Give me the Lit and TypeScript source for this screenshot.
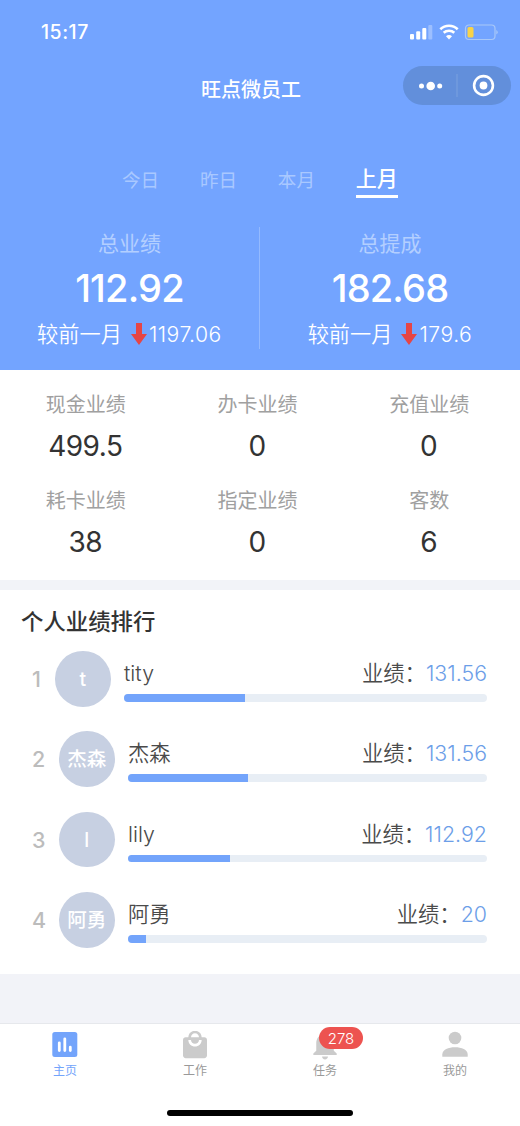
import { LitElement, html, css, svg } from "lit";
import { customElement } from "lit/decorators.js";
import { classMap } from "lit/directives/class-map.js";
import { styleMap } from "lit/directives/style-map.js";

const totals = [
  { label: "总业绩", value: "112.92", diff: "1197.06" },
  { label: "总提成", value: "182.68", diff: "179.6" },
];

const metrics = [
  { label: "现金业绩", value: "499.5" },
  { label: "办卡业绩", value: "0" },
  { label: "充值业绩", value: "0" },
  { label: "耗卡业绩", value: "38" },
  { label: "指定业绩", value: "0" },
  { label: "客数", value: "6" },
];

const ranking = [
  { name: "tity", avatar: "t", value: "131.56", percent: 33.3 },
  { name: "杰森", avatar: "杰森", value: "131.56", percent: 33.3 },
  { name: "lily", avatar: "l", value: "112.92", percent: 28.5 },
  { name: "阿勇", avatar: "阿勇", value: "20", percent: 5.1 },
];

const icons = {
  home: svg`<rect x="1.3" y="1" width="25" height="25" rx="2.5" fill="#73a4fb"/>
    <path d="M8.3 11.8v7.8M13.8 7.8v11.8M19.3 16.2v3.4" stroke="#fff" stroke-width="2.8" stroke-linecap="round"/>`,
  work: svg`<path transform="translate(-2 -1.600) scale(1.333 1.310)" fill="#cbcbcb" d="M19 6h-2c0-2.760-2.240-5-5-5S7 3.240 7 6H5c-1.100 0-1.990.9-1.990 2L3 20c0 1.100.9 2 2 2h14c1.100 0 2-.9 2-2V8c0-1.100-.9-2-2-2zm-7-3c1.660 0 3 1.340 3 3H9c0-1.660 1.340-3 3-3zm0 10c-2.760 0-5-2.240-5-5h2c0 1.660 1.340 3 3 3s3-1.340 3-3h2c0 2.760-2.240 5-5 5z"/>`,
  task: svg`<path transform="translate(-3.500 -3.700) scale(1.460)" fill="#cbcbcb" d="M12 22c1.100 0 2-.9 2-2h-4c0 1.100.89 2 2 2zm6-6v-5c0-3.070-1.640-5.640-4.500-6.320V4c0-.83-.67-1.500-1.500-1.500s-1.500.67-1.500 1.500v.68C7.630 5.360 6 7.920 6 11v5l-2 2v1h16v-1l-2-2z"/>`,
  me: svg`<circle cx="14" cy="7" r="6.300" fill="#cbcbcb"/>
    <path d="M1.300 25.800v-2.300C1.300 18.800 7.500 16.300 14 16.300s12.700 2.500 12.700 7.200v2.300z" fill="#cbcbcb"/>`,
};

const tabs = [
  { label: "主页", icon: icons.home, badge: "" },
  { label: "工作", icon: icons.work, badge: "" },
  { label: "任务", icon: icons.task, badge: "278" },
  { label: "我的", icon: icons.me, badge: "" },
];

@customElement("app-root")
export class AppRoot extends LitElement {
  static styles = css`
    :host {
      display: flex;
      flex-direction: column;
      box-sizing: border-box;
      width: 520px;
      height: 1126px;
      overflow: hidden;
      background: #f2f3f8;
      font-family: Inter, "Noto Sans CJK SC", sans-serif;
      color: #333;
      white-space: nowrap;
    }
    .header {
      height: 370px;
      background: #73a4ff;
      color: #fff;
      display: flex;
      flex-direction: column;
    }
    .status {
      height: 61px;
      display: flex;
      align-items: center;
      justify-content: space-between;
      padding: 0 21px 0 41px;
    }
    .time {
      font-size: 19.500px;
      font-weight: 500;
      letter-spacing: 0.5px;
      padding-top: 2px;
    }
    .signals {
      display: block;
      width: 90px;
      height: 20px;
    }
    .nav {
      height: 49px;
      display: grid;
      grid-template-columns: 1fr auto 1fr;
      align-items: center;
      padding-right: 9px;
    }
    .title {
      grid-column: 2;
      font-size: 20px;
      line-height: 28px;
      font-weight: 500;
      padding: 9px 18px 0 0;
      margin: 0 -18px 0 -9px;
    }
    .capsule {
      justify-self: end;
      width: 108px;
      height: 39px;
      border-radius: 20px;
      background: #628fdb;
    }
    .capsule svg {
      display: block;
    }
    .periods {
      display: flex;
      gap: 40.7px;
      padding-left: 122px;
      margin-top: 50px;
      height: 38px;
      align-items: flex-start;
    }
    .period {
      font-size: 18.6px;
      line-height: 28px;
      padding-top: 6px;
      color: #a9c8ff;
    }
    .period.active {
      font-size: 21px;
      line-height: 30px;
      padding: 4px 0 1px;
      font-weight: 500;
      color: #fff;
      border-bottom: 3px solid #fff;
    }
    .totals {
      display: grid;
      grid-template-columns: 259px 261px;
      margin-top: 29px;
      height: 122px;
    }
    .total {
      display: flex;
      flex-direction: column;
      align-items: center;
    }
    .total + .total {
      border-left: 1px solid #94baff;
    }
    .total-label {
      font-size: 21px;
      line-height: 30px;
      margin-top: 2px;
      color: #b3cfff;
    }
    .total-value {
      font-size: 38px;
      line-height: 46px;
      margin-top: 6px;
      font-weight: 550;
      letter-spacing: -0.8px;
    }
    .total-diff {
      display: flex;
      align-items: center;
      font-size: 21.200px;
      line-height: 30px;
      margin-top: 8px;
      font-weight: 350;
    }
    .diff-num {
      letter-spacing: 0.5px;
    }
    .arrow {
      display: block;
      width: 16px;
      height: 22px;
      margin: 0 2px 0 9px;
    }
    .metrics {
      height: 210px;
      box-sizing: border-box;
      background: #fff;
      padding: 20px 5px 0 0;
      display: grid;
      grid-template-columns: repeat(3, 1fr);
      grid-auto-rows: 95.5px;
    }
    .metric {
      display: flex;
      flex-direction: column;
      align-items: center;
    }
    .metric-label {
      font-size: 20px;
      line-height: 30px;
      color: #a0a0a0;
    }
    .metric-value {
      font-size: 28px;
      line-height: 36px;
      margin-top: 8px;
      letter-spacing: -0.5px;
      padding-right: 1px;
    }
    .ranking {
      margin-top: 10px;
      background: #fff;
      height: 384px;
      box-sizing: border-box;
      padding: 15px 33px 0 21px;
    }
    .ranking-title {
      font-size: 22.400px;
      line-height: 34px;
      font-weight: 500;
    }
    .row {
      display: flex;
      height: 56px;
      margin-top: 24.400px;
      padding-left: 11px;
    }
    .row.first {
      margin-top: 12px;
    }
    .rank {
      width: 27px;
      font-size: 21.500px;
      line-height: 56px;
      font-weight: 450;
      color: #bcbcbc;
    }
    .first .rank {
      width: 23px;
    }
    .avatar {
      width: 55.500px;
      height: 55.500px;
      border-radius: 50%;
      background: #c7d0e2;
      color: #fff;
      font-size: 19.500px;
      line-height: 56px;
      font-weight: 500;
      text-align: center;
    }
    .body {
      flex: 1;
      margin-left: 13.500px;
    }
    .line {
      display: flex;
      justify-content: space-between;
      font-size: 21.300px;
      line-height: 30px;
      margin-top: 7px;
      color: #4a4a4a;
      font-weight: 350;
    }
    .amount {
      color: #6c9ee8;
      letter-spacing: 0.05px;
    }
    .track {
      height: 7.500px;
      margin-top: 6px;
      border-radius: 4px;
      background: #e8eef5;
      overflow: hidden;
    }
    .fill {
      height: 100%;
      background: #73a4fb;
    }
    .tabbar {
      margin-top: auto;
      height: 103px;
      box-sizing: border-box;
      border-top: 1px solid #e6e8ec;
      background: #fff;
      display: flex;
      flex-direction: column;
    }
    .tabs {
      display: grid;
      grid-template-columns: repeat(4, 1fr);
      height: 85.500px;
    }
    .tab {
      display: flex;
      flex-direction: column;
      align-items: center;
      padding-top: 7px;
      font-size: 12px;
      line-height: 18px;
      color: #999;
    }
    .tab.active {
      color: #73a4fb;
    }
    .icon {
      position: relative;
      height: 31px;
    }
    .icon svg {
      display: block;
    }
    .badge {
      position: absolute;
      left: 8px;
      top: -4.500px;
      width: 44px;
      height: 22.500px;
      border-radius: 12px;
      background: #ed5350;
      color: #fff;
      font-size: 15px;
      line-height: 23px;
      font-weight: 350;
      text-align: center;
    }
    .home-bar {
      width: 186px;
      height: 6.500px;
      border-radius: 4px;
      background: #000;
      margin: 0 auto;
    }
  `;

  render() {
    return html`
      <div class="header">
        <div class="status">
          <span class="time">15:17</span>
          <svg class="signals" viewBox="0 0 90 20" fill="#fff">
            <rect x="1" y="13" width="4" height="5.500" rx="1" />
            <rect x="7.200" y="10.200" width="4" height="8.300" rx="1" />
            <rect x="13.300" y="7" width="4" height="11.500" rx="1" />
            <rect x="19.300" y="4" width="4" height="14.500" rx="1" opacity=".3" />
            <g fill="none" stroke="#fff" stroke-width="2.600">
              <path d="M31.300 8.300a12.500 12.500 0 0 1 17.400 0" />
              <path d="M34.700 11.800a7.700 7.700 0 0 1 10.600 0" />
            </g>
            <path d="M40 18.500l-3-3.300a4.200 4.200 0 0 1 6 0z" />
            <rect x="56.500" y="4" width="29.500" height="14.500" rx="3.500" fill="none" stroke="#a9c8f8" stroke-width="1.200" />
            <rect x="58.500" y="6" width="6" height="10.500" rx="1.500" fill="#f8d348" />
            <path d="M87.300 9v4.500a2.500 2.500 0 0 0 0-4.500z" fill="#a9c8f8" />
          </svg>
        </div>
        <div class="nav">
          <span class="title">旺点微员工</span>
          <div class="capsule">
            <svg width="108" height="39" viewBox="0 0 108 39" fill="#fff">
              <circle cx="18.500" cy="20" r="2.500" />
              <circle cx="27.700" cy="20" r="4.300" />
              <circle cx="36.700" cy="20" r="2.500" />
              <rect x="53.500" y="8" width="1" height="23" fill="#7ba1e0" />
              <circle cx="80.500" cy="19.500" r="9.400" fill="none" stroke="#fff" stroke-width="2.600" />
              <circle cx="80.500" cy="19.500" r="3.900" />
            </svg>
          </div>
        </div>
        <div class="periods">
          ${["今日", "昨日", "本月", "上月"].map(
            (p) => html`<span class=${classMap({ period: true, active: p === "上月" })}>${p}</span>`
          )}
        </div>
        <div class="totals">
          ${totals.map(
            (t) => html`<div class="total">
              <span class="total-label">${t.label}</span>
              <span class="total-value">${t.value}</span>
              <span class="total-diff"
                >较前一月<svg class="arrow" viewBox="0 0 16 22">
                  <path d="M5 0h6v11h5l-8 11L0 11h5z" fill="#e64545" /></svg
                ><span class="diff-num">${t.diff}</span></span
              >
            </div>`
          )}
        </div>
      </div>
      <div class="metrics">
        ${metrics.map(
          (m) => html`<div class="metric">
            <span class="metric-label">${m.label}</span>
            <span class="metric-value">${m.value}</span>
          </div>`
        )}
      </div>
      <div class="ranking">
        <div class="ranking-title">个人业绩排行</div>
        ${ranking.map(
          (r, i) => html`<div class=${classMap({ row: true, first: i === 0 })}>
            <span class="rank">${i + 1}</span>
            <span class="avatar">${r.avatar}</span>
            <div class="body">
              <div class="line">
                <span>${r.name}</span>
                <span>业绩：<span class="amount">${r.value}</span></span>
              </div>
              <div class="track">
                <div class="fill" style=${styleMap({ width: `${r.percent}%` })}></div>
              </div>
            </div>
          </div>`
        )}
      </div>
      <div class="tabbar">
        <div class="tabs">
          ${tabs.map(
            (t, i) => html`<div class=${classMap({ tab: true, active: i === 0 })}>
              <div class="icon">
                <svg width="28" height="30" viewBox="0 0 28 30">${t.icon}</svg>
                ${t.badge ? html`<span class="badge">${t.badge}</span>` : ""}
              </div>
              <span>${t.label}</span>
            </div>`
          )}
        </div>
        <div class="home-bar"></div>
      </div>
    `;
  }
}
